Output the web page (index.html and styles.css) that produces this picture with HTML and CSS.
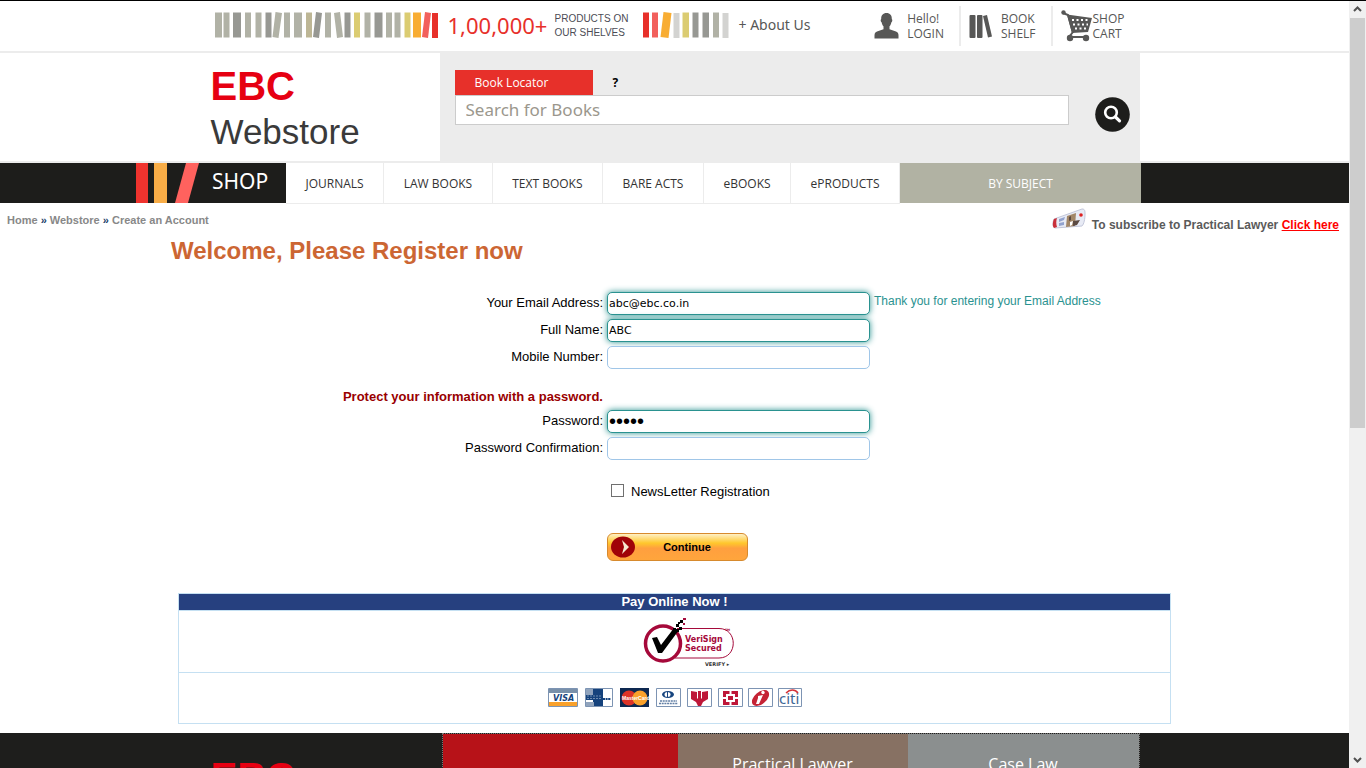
FILE: index.html
```html
<!DOCTYPE html>
<html lang="en">
<head>
<meta charset="utf-8">
<title>EBC Webstore - Create an Account</title>
<link rel="stylesheet" href="styles.css">
</head>
<body>
<div class="frame">
<div class="page">
  <header>
    <div class="topbar">
      <div class="wrap topbar-row">
        <svg class="books-long" width="226" height="28" viewBox="214 12 226 28" aria-hidden="true">
          <g fill="#b1b2a6"><path d="M215 12.500h7v25h-7zM223.500 12.500h6v25h-6zM245 12.500h6v25h-6zM255.500 12.500h6v25h-6zM275.500 12l6.500 1-3.500 25-6-1zM284 12.500h6v25h-6zM294 12.500h8v25h-8zM325 12.500h6v25h-6zM334 13l6-1 3 25-6 1zM364.500 12.500h6v25h-6zM386 12.500h6v25h-6zM394.500 12.500h6v25h-6z"/></g>
          <g fill="#979893"><path d="M233 12.500h8v25h-8zM265.500 12.500h6v25h-6zM316 12l6 1-3 25-6-1zM344.500 12.500h6v25h-6zM374.500 12.500h8v25h-8z"/></g>
          <path fill="#bdb695" d="M306 12.500h6v25h-6z"/><path fill="#dbcc72" d="M354 12.500h6v25h-6zM404.500 12.500h6v25h-6z"/>
          <path fill="#f8ad33" d="M413 12.500h8v25h-8z"/><path fill="#f2605c" d="M425 12l6 1-3 25-6-1z"/><path fill="#e7302a" d="M432 13h6v25h-6z"/>
        </svg>
        <span class="count">1,00,000+</span>
        <span class="count-note">PRODUCTS ON<br>OUR SHELVES</span>
        <svg class="books-short" width="86" height="28" viewBox="643 12 86 28" aria-hidden="true">
          <path fill="#e7302a" d="M643 12.500h6v25h-6z"/><path fill="#f2605c" d="M652 12.500h6v25h-6z"/><path fill="#f8ad33" d="M663.500 12l8 1-3 25-8-1z"/>
          <path fill="#d3d3d1" d="M673.500 13h6v25h-6zM722.500 13h6v25h-6z"/><path fill="#dbcc72" d="M682.500 12.500h6.500v25h-6.500z"/>
          <path fill="#979893" d="M692.500 12.500h6v25h-6zM702.500 12.500h6.500v25h-6.500z"/><path fill="#b1b2a6" d="M713 12.500h6v25h-6z"/>
        </svg>
        <a class="about" href="#about">+ About Us</a>
        <nav class="account" aria-label="Account">
          <a class="account-link" href="#login">
            <svg width="25" height="26" viewBox="0 0 25 26" fill="#575756" aria-hidden="true"><path d="M12.500 0C16 0 18 2.500 17.800 6c.9.500.6 3-.5 3.500-.3 2-1 3-1.800 3.800v3l6.500 2.200c2 .8 2.500 2 2.500 4V25.500H.5v-3c0-2 .5-3.200 2.500-4l6.500-2.200v-3C8.700 12.500 8 11.500 7.700 9.500 6.600 9 6.300 6.500 7.200 6 7 2.500 9 0 12.500 0z"/></svg>
            <span>Hello!<br>LOGIN</span>
          </a>
          <a class="account-link" href="#shelf">
            <svg width="24" height="25" viewBox="0 0 24 25" fill="#575756" aria-hidden="true"><rect x="0.500" y="1" width="6" height="23" rx="1"/><rect x="8" y="1" width="5.500" height="23" rx="1"/><path d="M14 2l4-1 5 21.500-4 1z"/></svg>
            <span>BOOK<br>SHELF</span>
          </a>
          <a class="account-link cart" href="#cart">
            <svg width="32" height="32" viewBox="0 0 32 32" aria-hidden="true"><g fill="none" stroke="#575756" stroke-width="2"><path d="M2 3l5 2 5 18"/><path d="M12 22l-4 5h17"/></g><circle cx="2.500" cy="2.500" r="2.200" fill="#575756"/><path fill="#575756" d="M6 4.500l25 3.500-4 14-16 1z"/><circle cx="9" cy="28" r="3.200" fill="#575756"/><circle cx="25" cy="28" r="3.200" fill="#575756"/><g stroke="#fff" stroke-width="2" stroke-dasharray="2 2.500"><path d="M11 10h17M12 14.500h15M14 18.500h11"/></g></svg>
            <span>SHOP<br>CART</span>
          </a>
        </nav>
      </div>
    </div>
    <div class="masthead">
      <div class="wrap masthead-row">
        <a class="logo" href="#home"><b>EBC</b><span>Webstore</span></a>
        <form class="search" role="search">
          <div class="search-main">
            <div class="search-tabs"><label class="locator" for="q">Book Locator</label><a class="help" href="#help">?</a></div>
            <input class="search-input" id="q" type="text" placeholder="Search for Books">
          </div>
          <button class="search-button" type="button" aria-label="Search">
            <svg width="35" height="35" viewBox="0 0 35 35" fill="none" aria-hidden="true"><circle cx="17.500" cy="17.500" r="17.300" fill="#1d1d1b"/><circle cx="16" cy="15.500" r="5.800" stroke="#fff" stroke-width="2.600"/><path d="M20.500 20l4 3.800" stroke="#fff" stroke-width="3.200" stroke-linecap="round"/></svg>
          </button>
        </form>
      </div>
    </div>
    <nav class="mainnav" aria-label="Shop">
      <svg class="nav-books" width="63" height="40" viewBox="0 0 63 40" aria-hidden="true"><path fill="#ef332e" d="M0 0h12v40H0z"/><path fill="#f8ad47" d="M18 0h13v40H18z"/><path fill="#ff625e" d="M50 0h13L52 40H39z"/></svg>
      <div class="mainnav-row">
        <a class="shop" href="#shop">SHOP</a>
        <div class="links">
          <a href="#journals">JOURNALS</a><a href="#law">LAW BOOKS</a><a href="#text">TEXT BOOKS</a><a href="#bare">BARE ACTS</a><a href="#ebooks">eBOOKS</a><a href="#eproducts">ePRODUCTS</a>
        </div>
        <a class="subject" href="#subject">BY SUBJECT</a>
      </div>
    </nav>
  </header>

  <div class="subbar">
    <nav class="crumbs" aria-label="Breadcrumb"><a href="#home">Home</a> <span>»</span> <a href="#webstore">Webstore</a> <span>»</span> <a href="#create">Create an Account</a></nav>
    <div class="subscribe">
      <svg width="34" height="22" viewBox="0 0 34 22" aria-hidden="true"><path fill="#e8ebf5" stroke="#c3c7da" d="M2 11L30 1c3 0 3 2 3 5 0 5-1 10-3 12L3 20C0 19 1 13 2 11z"/><path fill="#c9303a" d="M2 11l3-1c-1 3-1 6 0 9l-3 1c-2-2-1-7 0-9z"/><path fill="#92a3cf" d="M7 11l6-2-1 3-5 2zM7 15l5-1v3l-5 1z"/><path fill="#a28768" d="M15 8l9-3-1 13-9 1z"/><path fill="#5b4a42" d="M17 9l2-1v4l-2 1zM21 13l7-1-3 5-4 1z"/><path fill="#fff" d="M18 14l3-1-1 4-2 1z"/><circle cx="29" cy="7" r="1.800" fill="#d22"/></svg>
      <p>To subscribe to Practical Lawyer <a href="#subscribe">Click here</a></p>
    </div>
  </div>

  <main class="content">
    <h1>Welcome, Please Register now</h1>
    <form class="register">
      <label for="email">Your Email Address:</label>
      <input class="field done" id="email" type="text" value="abc@ebc.co.in">
      <p class="thanks">Thank you for entering your Email Address</p>
      <label for="name">Full Name:</label>
      <input class="field done" id="name" type="text" value="ABC">
      <label for="mobile">Mobile Number:</label>
      <input class="field" id="mobile" type="text">
      <h2>Protect your information with a password.</h2>
      <label for="pass">Password:</label>
      <input class="field done secret" id="pass" type="password" value="abcde">
      <label for="confirm">Password Confirmation:</label>
      <input class="field secret" id="confirm" type="password">
      <div class="newsletter"><input id="news" type="checkbox"><label for="news">NewsLetter Registration</label></div>
      <button class="continue" type="button">
        <svg width="24" height="22" viewBox="0 0 24 22" aria-hidden="true"><ellipse cx="12" cy="11" rx="12" ry="10.500" fill="#a00308"/><path fill="#f7ead0" d="M11 4l7 7-7 7 2-7z"/></svg>
        <span>Continue</span>
      </button>
    </form>
    <table class="pay">
      <thead><tr><th>Pay Online Now !</th></tr></thead>
      <tbody>
        <tr><td class="seal">
          <svg width="92" height="50" viewBox="0 0 92 50" role="img" aria-label="VeriSign Secured">
            <path d="M34 11.500h42c19 0 19 29.500 0 29.500H32" fill="#fff" stroke="#a5093a"/>
            <circle cx="20" cy="26.500" r="17.500" fill="#fff" stroke="#a5093a" stroke-width="3.500"/>
            <path d="M9 21l5-1 4 8L31 11l5 2-17 23h-4z"/>
            <path d="M33 7h3v3h-3zM37 3h3v3h-3zM30 11h3v3h-3zM36 10h3v3h-3zM35 5h2v2h-2zM33 12h3v3h-3z"/><path d="M40 1h3v2h-3zM40 6h2v2h-2z" fill="#a5093a"/>
            <text class="seal-name" x="42" y="25">VeriSign</text><text class="seal-name" x="42" y="34">Secured</text>
            <text class="seal-tm" x="82" y="14">TM</text><text class="seal-verify" x="62" y="49">VERIFY ▸</text>
          </svg>
        </td></tr>
        <tr><td class="cards">
          <svg width="254" height="20" viewBox="0 0 254 20" role="img" aria-label="Accepted cards">
            <g fill="#fff" stroke="#7d94b3"><path d="M.5.500h29v18H.5zM37.500.500h27v18h-27zM108.500.500h24v18h-24zM139.500.500h24v18h-24zM170.500.500h24v18h-24zM200.500.500h24v18h-24zM230.500.500h23v18h-23z"/></g>
            <path fill="#7990aa" d="M1 1h28v4H1z"/><path fill="#f9a12b" d="M1 14h28v4H1z"/>
            <text class="card-visa" x="5" y="13">VISA</text>
            <path fill="#15427c" d="M38 6h16v6H38zM45 1h10v17H45z"/><path fill="#91a4bd" d="M38 1h7v6h-7zM38 14h8v4h-8z"/><path d="M39 8h15M39 10.500h14" stroke="#6f8bb0" stroke-dasharray="2 1"/><path d="M55 11h8" stroke="#15427c" stroke-width="2" stroke-dasharray="2 .6"/>
            <path fill="#0d2850" d="M72 0h29v19H72z"/><circle cx="81" cy="10" r="7.500" fill="#dc3327"/><circle cx="92" cy="10" r="7.500" fill="#f9a12b"/><text class="card-mc" x="74" y="12">MasterCard</text>
            <ellipse cx="120" cy="6.500" rx="6" ry="3.500" fill="#17457f"/><ellipse cx="119.500" cy="6.500" rx="3" ry="2.500" fill="#fff"/><path d="M119.500 4v5" stroke="#17457f"/><path d="M112 13h17M111 15.500h19" stroke="#627fa5" stroke-width="1.500" stroke-dasharray="2 .7"/>
            <path fill="#be1738" d="M143 3l6 1v6l1 1V3h3v8l1-1V4l6-1v8l-5 3-2 4h-3l-2-4-5-3z"/>
            <path fill="#be1738" d="M175 3h15v14h-15z"/><path fill="#fff" d="M178 6h9v8h-9zM181.500 3h2v14h-2zM175 9h15v2h-15z"/><path fill="#be1738" d="M180 8h5v4h-5z"/>
            <ellipse cx="212.500" cy="10" rx="10" ry="6" transform="rotate(-40 212.500 10)" fill="#c52335"/><path fill="#fff" d="M210 8l5-1-4 9h-3l2-6z"/><circle cx="215" cy="4.500" r="1.700" fill="#fff"/><path fill="#fff" d="M201 1h6c-4 4-4 7-3 12l-3 4z"/>
            <text class="card-citi" x="231" y="16">citi</text><path d="M238 5c4-4 9-4 12 0" fill="none" stroke="#d43238" stroke-width="1.500"/>
          </svg>
        </td></tr>
      </tbody>
    </table>
  </main>

  <footer>
    <div class="wrap footer-row">
      <b class="footer-logo">EBC</b>
      <div class="footer-cols">
        <div class="red"></div>
        <a class="brown" href="#pl">Practical Lawyer</a>
        <a class="gray" href="#caselaw">Case Law</a>
      </div>
    </div>
  </footer>
</div>
<div class="scrollbar" aria-hidden="true">
  <svg width="17" height="17" viewBox="0 0 17 17"><path d="M5 10l3.500-3.500L12 10" fill="none" stroke="#505050" stroke-width="2"/></svg>
  <div class="track"><div class="thumb"></div></div>
  <svg width="17" height="17" viewBox="0 0 17 17"><path d="M5 7l3.500 3.500L12 7" fill="none" stroke="#505050" stroke-width="2"/></svg>
</div>
</div>
</body>
</html>
```

FILE: styles.css
```css
* { box-sizing: border-box; }
body { margin: 0; background: #fff; color: #000; font: 13px "Liberation Sans", Arial, sans-serif; }
a { color: inherit; text-decoration: none; }
svg { display: block; flex: none; }
p, h1, h2 { margin: 0; }

.frame { display: flex; height: 100vh; border-top: 1px solid #000; overflow: hidden; }
.page { flex: 1; min-width: 0; overflow: hidden; }
.wrap { width: 930px; margin: 0 auto; }

.topbar { border-bottom: 2px solid #ececec; }
.topbar-row { display: flex; align-items: center; height: 50px; padding-left: 4px; font-family: "Noto Sans", sans-serif; color: #575756; }
.count { width: 115px; padding: 0 0 2px 8px; font-size: 22px; line-height: 28px; color: #e7302a; white-space: nowrap; }
.count-note { width: 88px; font: 10px/14px "Liberation Sans", Arial, sans-serif; color: #4c4c55; white-space: nowrap; }
.about { margin-left: 10px; padding-bottom: 2px; font: 14px/20px "Noto Sans", sans-serif; white-space: nowrap; }
.account { display: flex; margin-left: auto; }
.account-link { display: flex; align-items: center; gap: 8px; height: 40px; padding: 0 15px 0 8px; border-right: 2px solid #ececec; font: 12px/15px "Open Sans", sans-serif; }
.account-link.cart { gap: 0; border-right: 0; }

.masthead { border-bottom: 2px solid #ececec; }
.masthead-row { display: flex; }
.logo { width: 230px; padding: 11px 0 0 1px; line-height: 45px; }
.logo b, .logo span { display: block; }
.logo b { font-size: 40px; color: #e60012; }
.logo span { font-size: 35px; color: #3a3a3a; }
.search { flex: 1; display: flex; justify-content: space-between; height: 108px; padding: 17px 10px 0 15px; background: #ececec; }
.search-main { width: 614px; }
.search-tabs { display: flex; line-height: 25px; }
.locator { width: 138px; padding-left: 20px; background: #e7302a; color: #fff; font: 12px/25px "Open Sans", sans-serif; }
.help { padding-left: 20px; font: bold 12px/25px "Open Sans", sans-serif; }
.search-input { display: block; width: 100%; height: 30px; padding: 0 9px 2px 10px; border: 1px solid #ccc; background: #fff; font: 17px "Noto Sans", sans-serif; color: #333; }
.search-input::placeholder { color: #9b978d; opacity: 1; }
.search-button { align-self: flex-start; margin-top: 27px; padding: 0; border: 0; background: none; }

.mainnav { display: grid; grid-template-columns: 1fr 931px 1fr; height: 40px; padding-left: 2px; background: #1d1d1b; font-family: "Open Sans", sans-serif; }
.nav-books { justify-self: end; margin-right: 11px; }
.mainnav-row { grid-column: 2; display: flex; line-height: 40px; }
.shop { width: 76px; padding-left: 2px; font: 21px/36px "Noto Sans", sans-serif; color: #fff; }
.links { flex: 1; display: flex; height: 41px; background: #fff; border-bottom: 1px solid #ececec; }
.links a { flex: 1 1 auto; border-right: 1px solid #ececec; text-align: center; font-size: 12px; line-height: 41px; color: #333; white-space: nowrap; }
.subject { width: 241px; height: 40px; background: #b1b2a3; color: #fff; text-align: center; font-size: 12px; line-height: 41px; }

.subbar { display: flex; justify-content: space-between; height: 33px; padding: 5px 10px 0 7px; font-weight: bold; white-space: nowrap; }
.crumbs { padding-top: 5px; font-size: 11px; line-height: 14px; color: #888; }
.crumbs span { color: #1b3f6b; }
.subscribe { display: flex; gap: 6px; font-size: 12px; color: #5a5a5a; }
.subscribe p { padding-top: 9px; line-height: 16px; }
.subscribe a { color: #f00; text-decoration: underline; }

.content { width: 1007px; margin: 0 auto; padding-bottom: 9px; }
h1 { font-size: 24px; line-height: 30px; color: #c63; }
.register { display: grid; grid-template-columns: 432px 263px 1fr; column-gap: 4px; row-gap: 4px; padding-top: 26px; }
.register > label { grid-column: 1; padding-top: 1px; text-align: right; line-height: 19px; }
.field { grid-column: 2; width: 100%; height: 23px; padding: 0 1px; border: 1px solid #a0c6e8; border-radius: 5px; background: #fff; font: 11px "DejaVu Sans", Verdana, sans-serif; color: #000; }
.field.done { border-color: #2a9290; box-shadow: 0 0 6px #2a9290; }
.field.secret { font: 20px "Liberation Sans", Arial, sans-serif; }
.thanks { grid-column: 3; font-size: 12px; line-height: 18px; color: #2a9290; }
h2 { grid-column: 1; padding: 16px 0 2px; font-size: 13px; line-height: 15px; text-align: right; color: #900; white-space: nowrap; }
.newsletter { grid-column: 2; display: flex; align-items: center; gap: 7px; margin-top: 18px; padding-left: 4px; line-height: 20px; }
.newsletter input { appearance: none; width: 13px; height: 13px; margin: 0 0 4px; border: 1px solid #707070; background: #fff; }
.continue { grid-column: 2; display: flex; align-items: center; width: 141px; height: 28px; margin-top: 27px; padding: 0 8px 0 3px; border: 1px solid #d78a2d; border-radius: 6px; background: linear-gradient(#fff0c4, #ffc72c 35%, #ff9f3f 55%, #ffa53c); font: bold 11px "Liberation Sans", Arial, sans-serif; color: #000; }
.continue span { flex: 1; }

.pay { width: 993px; margin: 32px auto 0; border-collapse: collapse; }
.pay th, .pay td { padding: 0; border: 1px solid #c5e0f2; }
.pay th { background: #26407f; color: #fff; font-size: 13px; line-height: 16px; }
.pay svg { margin: 0 auto; }
.pay .seal { padding: 6px 0 5px 28px; }
.pay .cards { padding: 15px 0; }
.seal-name { font: bold 8px "DejaVu Sans", sans-serif; fill: #a5093a; }
.seal-tm { font: bold 3px "DejaVu Sans", sans-serif; fill: #a5093a; }
.seal-verify { font: bold 5px "DejaVu Sans", sans-serif; fill: #333; }
.card-visa { font: italic bold 8px "DejaVu Sans", sans-serif; fill: #15427c; }
.card-mc { font: bold 5px "Liberation Sans", sans-serif; fill: #fff; }
.card-citi { font: 15px "Noto Sans", sans-serif; fill: #3f6796; }

footer { background: #1e1e1c; }
.footer-row { display: flex; height: 160px; }
.footer-logo { width: 232px; padding: 22px 0 0 1px; font-size: 40px; line-height: 45px; color: #e60012; }
.footer-cols { flex: 1; display: grid; grid-template-columns: 235px 230px 1fr; border: 1px dotted #777; text-align: center; font: 16px/24px "Open Sans", sans-serif; color: #fff; }
.footer-cols > * { padding-top: 18px; }
.red { background: #b71218; }
.brown { background: #877163; }
.gray { background: #8b8f8f; }

.scrollbar { display: flex; flex-direction: column; width: 17px; background: #f0f0f0; }
.track { flex: 1; padding: 0 1px; }
.thumb { height: 56%; background: #cdcdcd; }
```
